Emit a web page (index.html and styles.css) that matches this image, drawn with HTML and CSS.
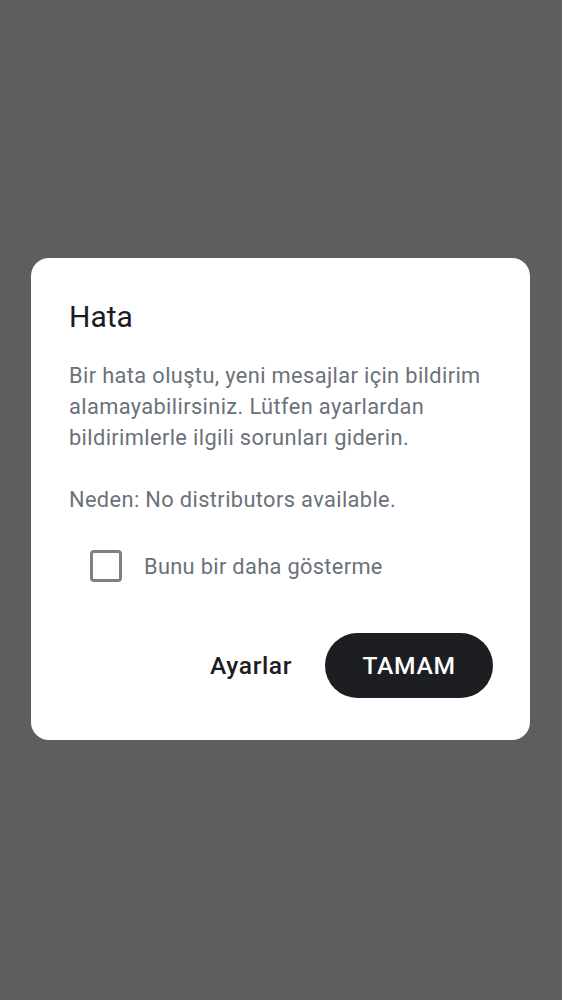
FILE: index.html
```html
<!DOCTYPE html>
<html lang="tr">
<head>
<meta charset="utf-8">
<title>Hata</title>
<link rel="stylesheet" href="styles.css">
</head>
<body>
<div class="scrim">
  <div class="dialog" role="dialog">
    <h1 class="title">Hata</h1>
    <p class="text">Bir hata oluştu, yeni mesajlar için bildirim alamayabilirsiniz. Lütfen ayarlardan bildirimlerle ilgili sorunları giderin.</p>
    <p class="text reason">Neden: No distributors available.</p>
    <label class="check-row">
      <span class="box"></span>
      <span class="check-label">Bunu bir daha gösterme</span>
    </label>
    <div class="actions">
      <button class="btn-text">Ayarlar</button>
      <button class="btn-filled">TAMAM</button>
    </div>
  </div>
</div>
</body>
</html>
```
FILE: styles.css
```css
* { box-sizing: border-box; }
html, body {
  margin: 0;
  padding: 0;
  height: 100%;
}
body {
  background: #5e5e5e;
  font-family: Roboto, "Noto Sans", "Liberation Sans", sans-serif;
}
.scrim {
  height: 1000px;
  display: flex;
  flex-direction: column;
  align-items: flex-start;
  padding: 258px 31px 0 31px;
}
.dialog {
  width: 499px;
  background: #ffffff;
  border-radius: 18px;
  padding: 41px 37px 42px 38px;
  display: flex;
  flex-direction: column;
}
.title {
  margin: 0;
  font-size: 30px;
  line-height: 36px;
  font-weight: 400;
  color: #1b1c1f;
}
.text {
  margin: 25px 0 0;
  font-size: 21.8px;
  line-height: 31px;
  letter-spacing: 0.38px;
  color: #6b717a;
}
.text.reason {
  margin-top: 31px;
}
.check-row {
  margin-top: 27px;
  margin-left: 21px;
  height: 48px;
  display: flex;
  align-items: center;
  gap: 22px;
}
.box {
  width: 32px;
  height: 32px;
  border: 3px solid #7b818a;
  border-radius: 4px;
  flex: none;
}
.check-label {
  font-size: 21.8px;
  letter-spacing: 0.33px;
  color: #6b717a;
}
.actions {
  margin-top: 43px;
  display: flex;
  justify-content: flex-end;
  align-items: center;
  gap: 33px;
}
.btn-text {
  border: none;
  background: none;
  padding: 0;
  font-family: inherit;
  font-size: 24.6px;
  font-weight: 500;
  letter-spacing: 0.6px;
  color: #1d1e22;
}
.btn-filled {
  width: 168px;
  height: 65px;
  border: none;
  border-radius: 33px;
  background: #1d1e22;
  color: #ffffff;
  font-family: inherit;
  font-size: 24.6px;
  font-weight: 500;
  letter-spacing: 0.7px;
}
```
